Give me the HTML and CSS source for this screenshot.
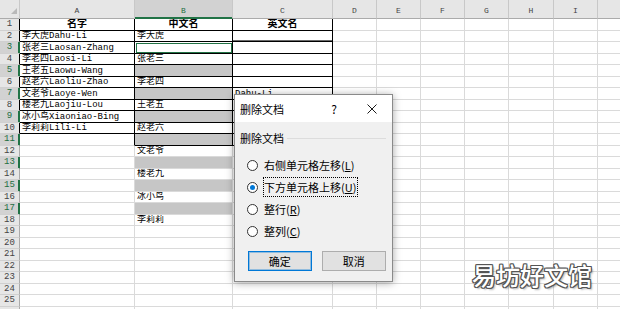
FILE: index.html
```html
<!DOCTYPE html>
<html lang="zh">
<head>
    <meta charset="UTF-8">
    <title>删除文档</title>
    <link rel="stylesheet" href="styles.css">
</head>
<body>
    <table class="sheet">
        <colgroup>
            <col style="width:20px"><col style="width:115px"><col style="width:98px"><col style="width:100px">
            <col style="width:44px"><col style="width:44px"><col style="width:44px"><col style="width:44px">
            <col style="width:45px"><col style="width:44px"><col style="width:44px">
        </colgroup>
        <thead>
            <tr>
                <th class="corner"><svg width="6" height="6" viewBox="0 0 6 6"><polygon points="6,0 6,6 0,6" fill="#b9b9b9"/></svg></th>
                <th>A</th><th class="on">B</th><th>C</th><th>D</th><th>E</th><th>F</th><th>G</th><th>H</th><th>I</th><th></th>
            </tr>
        </thead>
        <tbody>
            <tr><th class="rh edge">1</th><td class="bd b">名字</td><td class="bd b">中文名</td><td class="bd b">英文名</td><td></td><td></td><td></td><td></td><td></td><td></td><td></td></tr>
            <tr><th class="rh edge">2</th><td class="bd">李大虎Dahu-Li</td><td class="bd">李大虎</td><td class="bd thick"></td><td></td><td></td><td></td><td></td><td></td><td></td><td></td></tr>
            <tr><th class="rh on">3</th><td class="bd">张老三Laosan-Zhang</td><td class="bd act"></td><td class="bd"></td><td></td><td></td><td></td><td></td><td></td><td></td><td></td></tr>
            <tr><th class="rh edge">4</th><td class="bd">李老四Laosi-Li</td><td class="bd">张老三</td><td class="bd"></td><td></td><td></td><td></td><td></td><td></td><td></td><td></td></tr>
            <tr><th class="rh on">5</th><td class="bd">王老五Laowu-Wang</td><td class="bd gray"></td><td class="bd"></td><td></td><td></td><td></td><td></td><td></td><td></td><td></td></tr>
            <tr><th class="rh edge">6</th><td class="bd">赵老六Laoliu-Zhao</td><td class="bd">李老四</td><td class="bd"></td><td></td><td></td><td></td><td></td><td></td><td></td><td></td></tr>
            <tr><th class="rh on">7</th><td class="bd">文老爷Laoye-Wen</td><td class="bd gray"></td><td class="bd">Dahu-Li</td><td></td><td></td><td></td><td></td><td></td><td></td><td></td></tr>
            <tr><th class="rh edge">8</th><td class="bd">楼老九Laojiu-Lou</td><td class="bd">王老五</td><td class="bd"></td><td></td><td></td><td></td><td></td><td></td><td></td><td></td></tr>
            <tr><th class="rh on">9</th><td class="bd">冰小鸟Xiaoniao-Bing</td><td class="bd gray"></td><td class="bd"></td><td></td><td></td><td></td><td></td><td></td><td></td><td></td></tr>
            <tr><th class="rh edge">10</th><td class="bd">李莉莉Lili-Li</td><td class="bd">赵老六</td><td class="bd"></td><td></td><td></td><td></td><td></td><td></td><td></td><td></td></tr>
            <tr><th class="rh on">11</th><td class="rb"></td><td class="bd gray"></td><td class="bd"></td><td></td><td></td><td></td><td></td><td></td><td></td><td></td></tr>
            <tr><th class="rh">12</th><td></td><td>文老爷</td><td></td><td></td><td></td><td></td><td></td><td></td><td></td><td></td></tr>
            <tr><th class="rh on">13</th><td></td><td class="gray"></td><td></td><td></td><td></td><td></td><td></td><td></td><td></td><td></td></tr>
            <tr><th class="rh">14</th><td></td><td>楼老九</td><td></td><td></td><td></td><td></td><td></td><td></td><td></td><td></td></tr>
            <tr><th class="rh on">15</th><td></td><td class="gray"></td><td></td><td></td><td></td><td></td><td></td><td></td><td></td><td></td></tr>
            <tr><th class="rh">16</th><td></td><td>冰小鸟</td><td></td><td></td><td></td><td></td><td></td><td></td><td></td><td></td></tr>
            <tr><th class="rh on">17</th><td></td><td class="gray"></td><td></td><td></td><td></td><td></td><td></td><td></td><td></td><td></td></tr>
            <tr><th class="rh">18</th><td></td><td>李莉莉</td><td></td><td></td><td></td><td></td><td></td><td></td><td></td><td></td></tr>
            <tr><th class="rh">19</th><td></td><td></td><td></td><td></td><td></td><td></td><td></td><td></td><td></td><td></td></tr>
            <tr><th class="rh">20</th><td></td><td></td><td></td><td></td><td></td><td></td><td></td><td></td><td></td><td></td></tr>
            <tr><th class="rh">21</th><td></td><td></td><td></td><td></td><td></td><td></td><td></td><td></td><td></td><td></td></tr>
            <tr><th class="rh">22</th><td></td><td></td><td></td><td></td><td></td><td></td><td></td><td></td><td></td><td></td></tr>
            <tr><th class="rh">23</th><td></td><td></td><td></td><td></td><td></td><td></td><td></td><td></td><td></td><td></td></tr>
            <tr><th class="rh">24</th><td></td><td></td><td></td><td></td><td></td><td></td><td></td><td></td><td></td><td></td></tr>
            <tr><th class="rh">25</th><td></td><td></td><td></td><td></td><td></td><td></td><td></td><td></td><td></td><td></td></tr>
            <tr><th class="rh"></th><td></td><td></td><td></td><td></td><td></td><td></td><td></td><td></td><td></td><td></td></tr>
        </tbody>
    </table>

    <div class="dialog">
        <div class="dialog-title">
            <span>删除文档</span>
            <span class="help">?</span>
            <svg class="close" width="10" height="10" viewBox="0 0 10 10">
                <path d="M0.5 0.5 L9.5 9.5 M9.5 0.5 L0.5 9.5" stroke="#1a1a1a" stroke-width="1" fill="none"/>
            </svg>
        </div>
        <div class="dialog-body">
            <div class="group">删除文档</div>
            <div class="options">
                <label class="opt"><span class="radio"></span><span>右侧单元格左移(<u>L</u>)</span></label>
                <label class="opt"><span class="radio on"></span><span class="focus">下方单元格上移(<u>U</u>)</span></label>
                <label class="opt"><span class="radio"></span><span>整行(<u>R</u>)</span></label>
                <label class="opt"><span class="radio"></span><span>整列(<u>C</u>)</span></label>
            </div>
            <div class="buttons">
                <button class="btn default">确定</button>
                <button class="btn">取消</button>
            </div>
        </div>
    </div>

    <div class="mark">易坊好文馆</div>
</body>
</html>
```

FILE: styles.css
```css
html, body {
    margin: 0;
    overflow: hidden;
    background: #fff;
}

body {
    width: 620px;
    height: 309px;
    position: relative;
    font-family: "Liberation Mono", "Noto Sans CJK SC", monospace;
}

/* spreadsheet grid */
.sheet {
    border-collapse: separate;
    border-spacing: 0;
    table-layout: fixed;
    width: 642px;
}

.sheet tbody tr {
    height: 11.5px;
}

.sheet thead tr {
    height: 19px;
}

.sheet td, .sheet th {
    box-sizing: border-box;
    height: 11.5px;
    padding: 0;
    border-right: 1px solid #dadada;
    border-bottom: 1px solid #dadada;
    white-space: nowrap;
    overflow: hidden;
    font-size: 9px;
    line-height: 10px;
    font-weight: normal;
    color: #000;
    text-align: left;
    vertical-align: bottom;
}

.sheet td {
    padding-left: 2px;
}

.sheet thead th {
    height: 19px;
    background: #e6e6e6;
    text-align: center;
    font-size: 8px;
    color: #444;
    border-right-color: #c8c8c8;
    border-bottom-color: #ababab;
    padding-bottom: 2px;
}

.sheet thead th.on {
    background: #d2d2d2;
    color: #1e6e42;
    border-bottom-color: #217346;
    box-shadow: inset 0 -1px 0 #217346;
}

.sheet thead th.corner {
    text-align: right;
    padding: 0 2px 3px 0;
    line-height: 6px;
}

.rh {
    background: #e6e6e6;
    text-align: center !important;
    vertical-align: middle !important;
    color: #444 !important;
    border-right-color: #ababab !important;
    border-bottom-color: #d0d0d0 !important;
}

.rh.edge {
    border-right-color: #000 !important;
}

.rh.on {
    background: #d2d2d2;
    color: #1e6e42 !important;
    border-right-color: #217346 !important;
    box-shadow: inset -1px 0 0 #217346;
}

.sheet td.bd {
    border-right-color: #000;
    border-bottom-color: #000;
}

.sheet td.rb {
    border-right-color: #000;
}

.sheet td.b {
    font-weight: bold;
    text-align: center;
    font-size: 10px;
    padding-left: 0;
}

.sheet td.thick {
    box-shadow: inset 0 -1px 0 #6a6a6a;
}

.sheet td.gray {
    background: #c6c6c6;
}

.sheet td.act {
    outline: 1px solid #217346;
    outline-offset: -2px;
}

/* delete dialog */
.dialog {
    position: absolute;
    left: 234px;
    top: 94px;
    width: 159px;
    height: 188px;
    box-sizing: border-box;
    border: 1px solid #8a8a8a;
    background: #f0f0f0;
    box-shadow: 0 1px 8px rgba(0, 0, 0, 0.35);
    font-family: "Noto Sans CJK SC", sans-serif;
    font-size: 11px;
    color: #000;
    display: flex;
    flex-direction: column;
}

.dialog-title {
    height: 27px;
    background: #fff;
    display: flex;
    align-items: center;
    padding-left: 5px;
}

.help {
    margin-left: auto;
    font-size: 12px;
}

.close {
    margin-left: 30px;
    margin-right: 15px;
}

.dialog-body {
    flex: 1;
    padding: 8px 6px 0 5px;
}

.group {
    display: flex;
    align-items: center;
    line-height: 16px;
}

.group::after {
    content: "";
    flex: 1;
    border-top: 1px solid #dcdcdc;
    margin-left: 3px;
}

.options {
    margin-top: 8px;
}

.opt {
    height: 22px;
    display: flex;
    align-items: center;
    padding-left: 7px;
}

.radio {
    width: 11px;
    height: 11px;
    box-sizing: border-box;
    border: 1px solid #333;
    border-radius: 50%;
    background: #fff;
    margin-right: 6px;
    display: flex;
    align-items: center;
    justify-content: center;
}

.radio.on::after {
    content: "";
    width: 5px;
    height: 5px;
    border-radius: 50%;
    background: #0078d7;
}

.focus {
    border: 1px dotted #000;
    line-height: 18px;
    margin-left: -1px;
    padding-right: 1px;
}

.buttons {
    display: flex;
    gap: 10px;
    padding-left: 8px;
    margin-top: 9px;
}

.btn {
    width: 64px;
    height: 20px;
    box-sizing: border-box;
    border: 1px solid #adadad;
    background: #e1e1e1;
    font-family: "Noto Sans CJK SC", sans-serif;
    font-size: 11px;
    color: #000;
    padding: 0;
}

.btn + .btn {
    width: 65px;
}

.btn.default {
    border-color: #0078d7;
    box-shadow: inset 0 0 0 1px rgba(0, 120, 215, 0.35);
}

/* watermark */
.mark {
    position: absolute;
    left: 472px;
    top: 260px;
    font-family: "Noto Sans CJK SC", sans-serif;
    font-size: 24px;
    line-height: 30px;
    font-weight: 500;
    color: #fff;
    text-shadow: 1px 1px 0 #555, -1px -1px 0 #555, 1px -1px 0 #555, -1px 1px 0 #555,
                 0 1px 0 #555, 1px 0 0 #555, 0 -1px 0 #555, -1px 0 0 #555,
                 2px 2px 2px rgba(0, 0, 0, 0.3);
}
```
